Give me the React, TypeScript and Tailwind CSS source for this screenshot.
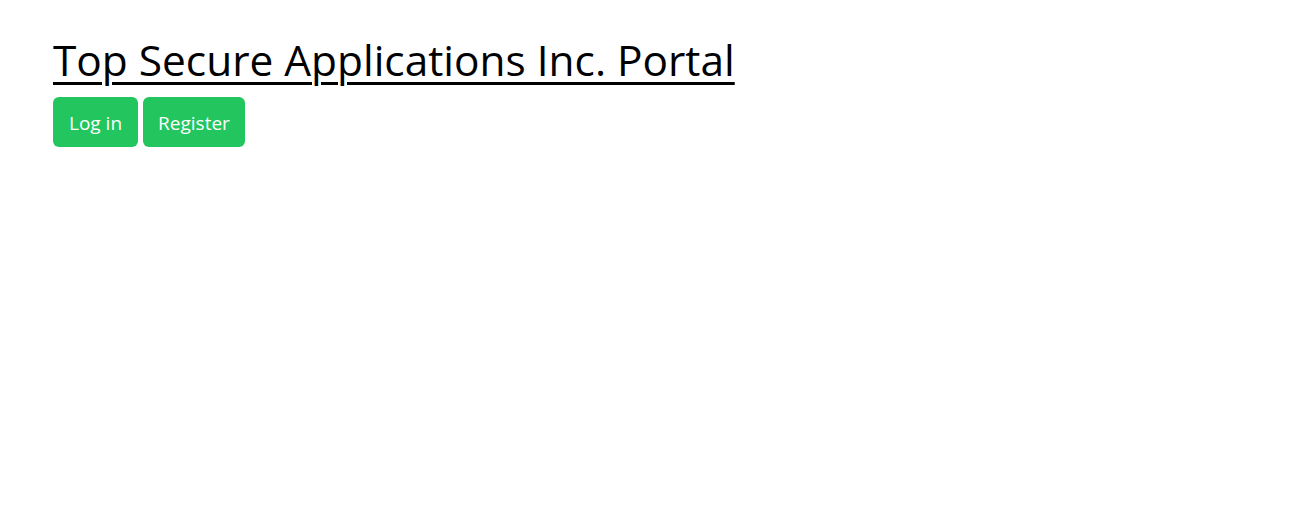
import React from 'react';

export default function App() {
  return (
    <div className="min-h-screen bg-white px-[53px] pt-[35px] font-['Open_Sans',sans-serif] text-black">
      <h1 className="text-[42.4px] leading-[50px]">
        <a href="#" className="underline decoration-[3px] underline-offset-[6px]">
          Top Secure Applications Inc. Portal
        </a>
      </h1>
      <div className="mt-[12px] flex gap-[5px]">
        <button className="h-[50px] rounded-md bg-[#22c55e] px-[16px] pt-[2px] text-[19px] text-white">Log in</button>
        <button className="h-[50px] rounded-md bg-[#22c55e] px-[15px] pt-[2px] text-[19px] text-white">Register</button>
      </div>
    </div>
  );
}
